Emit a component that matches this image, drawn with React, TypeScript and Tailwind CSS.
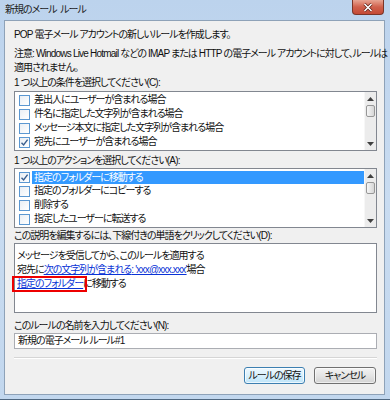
import React from "react";

const font =
  "[font-family:'Liberation_Sans','Noto_Sans_CJK_JP',sans-serif] [font-feature-settings:'palt'] tracking-[-1px]";

// latin runs are kept wider than the packed Japanese text
const En = ({ children }: { children: React.ReactNode }) => (
  <span className="tracking-[-0.8px]">{children}</span>
);

const Checkbox = ({ checked }: { checked?: boolean }) => (
  <span className="w-[11px] h-[11px] border border-[#5b97d1] bg-gradient-to-br from-[#e9eef4] to-white flex items-center justify-center shrink-0">
    {checked && (
      <svg width="9" height="9" viewBox="0 0 9 9">
        <path d="M1.5 4.8 L3.6 7 L7.6 1.6" stroke="#3b5f8f" strokeWidth="1.4" fill="none" />
      </svg>
    )}
  </span>
);

const ScrollBar = () => (
  <div className="w-[12px] h-full flex flex-col bg-[#ececec] border-l border-[#f7f7f7]">
    <div className="h-[13px] flex items-center justify-center">
      <svg width="7" height="4" viewBox="0 0 7 4">
        <path d="M0 4 L3.5 0 L7 4 Z" fill="#404040" />
      </svg>
    </div>
    <div className="h-[12px] mx-[1px] rounded-[2px] border border-[#979797] bg-gradient-to-r from-[#f6f6f6] to-[#d6d6d6]" />
    <div className="flex-1" />
    <div className="h-[13px] flex items-center justify-center">
      <svg width="7" height="4" viewBox="0 0 7 4">
        <path d="M0 0 L3.5 4 L7 0 Z" fill="#404040" />
      </svg>
    </div>
  </div>
);

interface Row {
  label: string;
  checked?: boolean;
  selected?: boolean;
}

const ListBox = ({ rows }: { rows: Row[] }) => (
  <div className="h-[60px] border border-[#828790] bg-white flex">
    <div className="flex-1 pt-[1px]">
      {rows.map((r) => (
        <div key={r.label} className="h-[14px] flex items-center pl-[4px] gap-[2px]">
          <Checkbox checked={r.checked} />
          <span
            className={
              r.selected
                ? "flex-1 h-[13px] leading-[13px] pl-[2px] bg-[#3399ff] text-white"
                : "flex-1 pl-[2px]"
            }
          >
            {r.label}
          </span>
        </div>
      ))}
    </div>
    <ScrollBar />
  </div>
);

const conditions: Row[] = [
  { label: "差出人にユーザーが含まれる場合" },
  { label: "件名に指定した文字列が含まれる場合" },
  { label: "メッセージ本文に指定した文字列が含まれる場合" },
  { label: "宛先にユーザーが含まれる場合", checked: true },
];

const actions: Row[] = [
  { label: "指定のフォルダーに移動する", checked: true, selected: true },
  { label: "指定のフォルダーにコピーする" },
  { label: "削除する" },
  { label: "指定したユーザーに転送する" },
];

export default function App() {
  return (
    <div
      className={`w-[390px] h-[400px] bg-gradient-to-b from-[#bcd3ed] via-[#c9dcf1] to-[#c2d7ee] border-b border-[#4f6780] flex flex-col text-[10px] leading-[14px] text-[#111111] whitespace-nowrap ${font}`}
    >
      {/* title bar */}
      <div className="h-[20px] flex justify-between pl-[5px] pr-[6px] shrink-0">
        <span className="mt-[3px] text-[#1c1c1c]">新規のメール&nbsp; ルール</span>
        <div className="w-[32px] h-[15px] rounded-b-[4px] border border-t-0 border-[#7b3528] bg-gradient-to-b from-[#e7a493] via-[#d0604c] to-[#c44a36] flex items-center justify-center">
          <svg width="10" height="9" viewBox="0 0 10 9">
            <path d="M1.5 1 L8.5 8 M8.5 1 L1.5 8" stroke="#5a1f16" strokeWidth="3" />
            <path d="M1.5 1 L8.5 8 M8.5 1 L1.5 8" stroke="#ffffff" strokeWidth="1.6" />
          </svg>
        </div>
      </div>

      {/* client */}
      <div className="h-[375px] ml-[4px] mr-[5px] border border-[#8ea2b8] bg-[#f0f0f0] pl-[9px] pr-[7px] pt-[7px] flex flex-col shrink-0">
        <div className="h-[14px]">
          <En>POP </En>電子メール アカウントの新しいルールを作成します。
        </div>
        <div className="mt-[5px]">
          注意<En>: Windows Live Hotmail </En>などの<En> IMAP </En>または<En> HTTP </En>
          の電子メール アカウントに対して、ルールは
          <br />
          適用されません。
        </div>

        <div className="mt-[1px] h-[14px]">
          <En>1 </En>つ以上の条件を選択してください<En>(C):</En>
        </div>
        <div className="mt-[1px]">
          <ListBox rows={conditions} />
        </div>

        <div className="mt-[3px] h-[14px]">
          <En>1 </En>つ以上のアクションを選択してください<En>(A):</En>
        </div>
        <ListBox rows={actions} />

        <div className="mt-[1px] h-[14px]">
          この説明を編集するには、下線付きの単語をクリックしてください<En>(D):</En>
        </div>
        <div className="h-[70px] border border-[#828790] bg-white pt-[5px] pl-[2px]">
          <div className="h-[14px]">メッセージを受信してから、このルールを適用する</div>
          <div className="h-[14px]">
            宛先に
            <span className="text-[#0a33d6] underline">
              次の文字列が含まれる<En>: 'xxx@xxx.xxx'</En>
            </span>
            場合
          </div>
          <div className="h-[14px]">
            <span className="relative text-[#0a33d6] underline">
              指定のフォルダー
              <span className="absolute -left-[5px] -right-[4px] -top-[2px] -bottom-[3px] border-2 border-[#ee0000]" />
            </span>
            に移動する
          </div>
        </div>

        <div className="mt-[6px] h-[14px]">
          このルールの名前を入力してください<En>(N):</En>
        </div>
        <div className="h-[16px] border border-[#abadb3] bg-white pl-[3px] flex items-center">
          新規の電子メール ルール<En> #1</En>
        </div>

        <div className="mt-[8px] h-[2px] border-t border-[#d5d5d5] border-b border-b-white" />

        <div className="mt-[8px] flex justify-end gap-[9px] pr-[1px]">
          <button className="w-[61px] h-[17px] rounded-[3px] border border-[#3c7fb1] bg-gradient-to-b from-[#eef8fe] via-[#d9f0fc] to-[#bde4f9] leading-[14px] shadow-[inset_0_0_0_1px_rgba(255,255,255,0.7)]">
            ルールの保存
          </button>
          <button className="w-[62px] h-[17px] rounded-[3px] border border-[#707070] bg-gradient-to-b from-[#f3f3f3] via-[#e5e5e5] to-[#d3d3d3] leading-[14px] shadow-[inset_0_0_0_1px_rgba(255,255,255,0.6)]">
            キャンセル
          </button>
        </div>
      </div>
    </div>
  );
}
